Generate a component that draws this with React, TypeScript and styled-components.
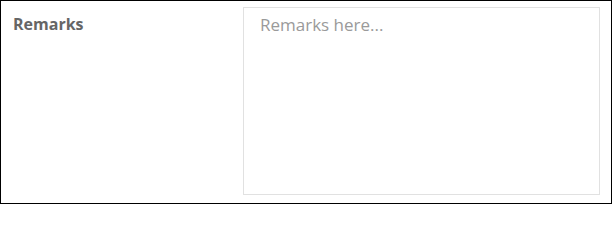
import React from "react";
import styled, { createGlobalStyle } from "styled-components";

const GlobalStyle = createGlobalStyle`
  body {
    margin: 0;
    background: #fff;
    font-family: "Open Sans", "Liberation Sans", sans-serif;
  }
`;

const FormRow = styled.div`
  box-sizing: border-box;
  width: 612px;
  height: 204px;
  border: 1px solid #000;
  display: grid;
  grid-template-columns: 242px 357px;
  padding: 6px 0 9px 0;
`;

const Label = styled.label`
  padding: 6px 0 0 12px;
  font-size: 16px;
  font-weight: 700;
  color: #666;
  line-height: 22px;
`;

const RemarksInput = styled.textarea`
  box-sizing: border-box;
  width: 357px;
  height: 188px;
  margin: 0;
  border: 1px solid #e1e1e1;
  padding: 5px 16px;
  font-family: "Open Sans", "Liberation Sans", sans-serif;
  font-size: 17px;
  line-height: 24px;
  color: #555;
  resize: none;
  outline: none;

  &::placeholder {
    color: #9a9a9a;
  }
`;

const App = () => {
  return (
    <>
      <GlobalStyle />
      <FormRow>
        <Label htmlFor="remarks">Remarks</Label>
        <RemarksInput id="remarks" placeholder="Remarks here..." />
      </FormRow>
    </>
  );
};

export default App;
